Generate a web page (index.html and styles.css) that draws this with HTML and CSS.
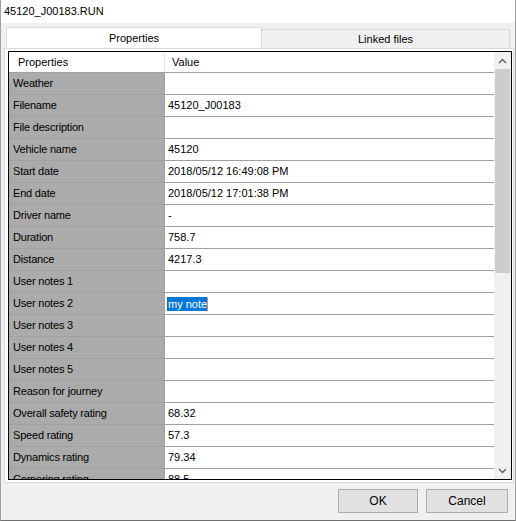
FILE: index.html
```html
<!DOCTYPE html>
<html>
<head>
<meta charset="utf-8">
<link rel="stylesheet" href="styles.css">
</head>
<body>
<div class="window">
  <div class="titlebar">45120_J00183.RUN</div>
  <div class="body">
    <div class="tabs">
      <div class="tab active">Properties</div>
      <div class="tab">Linked files</div>
    </div>
    <div class="panel">
      <div class="grid">
        <div class="grid-main">
          <div class="header">
            <div class="hcell c1">Properties</div>
            <div class="hcell c2">Value</div>
          </div>
          <div class="rows">
            <div class="row"><div class="cell c1">Weather</div><div class="cell c2"></div></div>
            <div class="row"><div class="cell c1">Filename</div><div class="cell c2">45120_J00183</div></div>
            <div class="row"><div class="cell c1">File description</div><div class="cell c2"></div></div>
            <div class="row"><div class="cell c1">Vehicle name</div><div class="cell c2">45120</div></div>
            <div class="row"><div class="cell c1">Start date</div><div class="cell c2">2018/05/12 16:49:08 PM</div></div>
            <div class="row"><div class="cell c1">End date</div><div class="cell c2">2018/05/12 17:01:38 PM</div></div>
            <div class="row"><div class="cell c1">Driver name</div><div class="cell c2">-</div></div>
            <div class="row"><div class="cell c1">Duration</div><div class="cell c2">758.7</div></div>
            <div class="row"><div class="cell c1">Distance</div><div class="cell c2">4217.3</div></div>
            <div class="row"><div class="cell c1">User notes 1</div><div class="cell c2"></div></div>
            <div class="row"><div class="cell c1">User notes 2</div><div class="cell c2 editing"><span class="sel">my note</span><span class="caret"></span></div></div>
            <div class="row"><div class="cell c1">User notes 3</div><div class="cell c2"></div></div>
            <div class="row"><div class="cell c1">User notes 4</div><div class="cell c2"></div></div>
            <div class="row"><div class="cell c1">User notes 5</div><div class="cell c2"></div></div>
            <div class="row"><div class="cell c1">Reason for journey</div><div class="cell c2"></div></div>
            <div class="row"><div class="cell c1">Overall safety rating</div><div class="cell c2">68.32</div></div>
            <div class="row"><div class="cell c1">Speed rating</div><div class="cell c2">57.3</div></div>
            <div class="row"><div class="cell c1">Dynamics rating</div><div class="cell c2">79.34</div></div>
            <div class="row"><div class="cell c1">Cornering rating</div><div class="cell c2">88.5</div></div>
          </div>
        </div>
        <div class="scrollbar">
          <div class="arrow">
            <svg width="9" height="6" viewBox="0 0 9 6"><path d="M1 5 L4.5 1.5 L8 5" fill="none" stroke="#606060" stroke-width="1.4"/></svg>
          </div>
          <div class="track">
            <div class="thumb"></div>
          </div>
          <div class="arrow">
            <svg width="9" height="6" viewBox="0 0 9 6"><path d="M1 1 L4.5 4.5 L8 1" fill="none" stroke="#606060" stroke-width="1.4"/></svg>
          </div>
        </div>
      </div>
    </div>
    <div class="buttons">
      <div class="btn">OK</div>
      <div class="btn">Cancel</div>
    </div>
  </div>
</div>
</body>
</html>
```
FILE: styles.css
```css
* { box-sizing: border-box; }
html, body { margin: 0; padding: 0; }
body {
  width: 516px;
  height: 521px;
  overflow: hidden;
  background: #f0f0f0;
  font-family: "Liberation Sans", Arial, sans-serif;
  font-size: 11px;
  color: #000;
}
.window {
  width: 516px;
  height: 521px;
  border: 1px solid #a0a0a0;
  border-top: none;
  border-bottom-color: #707070;
  display: flex;
  flex-direction: column;
  background: #f0f0f0;
}
.titlebar {
  height: 23px;
  background: #fff;
  font-family: "Liberation Sans", Arial, sans-serif;
  font-size: 11px;
  line-height: 22px;
  padding-left: 3px;
  color: #000;
}
.body {
  flex: 1;
  display: flex;
  flex-direction: column;
  padding: 4px 1px 0 3px;
}
.tabs {
  display: flex;
  height: 21px;
  align-items: flex-end;
  padding-left: 2px;
}
.tab {
  height: 19px;
  width: 249px;
  border: 1px solid #d9d9d9;
  border-bottom: none;
  background: #f0f0f0;
  text-align: center;
  line-height: 19px;
  margin-left: -1px;
}
.tab.active {
  width: 256px;
  height: 21px;
  background: #fff;
  line-height: 20px;
  margin-left: 0;
  position: relative;
  z-index: 1;
}
.panel {
  height: 435px;
  background: #fff;
  border: 1px solid #d9d9d9;
  padding: 2px 1px 3px 3px;
  width: 510px;
}
.grid {
  height: 429px;
  border: 1px solid #000;
  display: flex;
  overflow: hidden;
}
.grid-main {
  flex: 1;
  display: flex;
  flex-direction: column;
  overflow: hidden;
}
.header {
  display: flex;
  height: 21px;
  flex: none;
  border-bottom: 1px solid #a0a0a0;
  background: #fff;
}
.hcell {
  line-height: 20px;
}
.hcell.c1 {
  width: 156px;
  padding-left: 9px;
  border-right: 1px solid #e5e5e5;
}
.hcell.c2 {
  padding-left: 7px;
}
.rows {
  flex: 1;
  overflow: hidden;
}
.row {
  display: flex;
  height: 22px;
  border-bottom: 1px solid #a0a0a0;
}
.cell {
  line-height: 21px;
  white-space: nowrap;
}
.cell.c1 {
  width: 156px;
  background: #ababab;
  padding-left: 4px;
  border-right: 1px solid #a0a0a0;
  letter-spacing: -0.2px;
}
.cell.c2 {
  flex: 1;
  padding-left: 3px;
  background: #fff;
}
.cell.editing {
  display: flex;
  align-items: center;
  padding-left: 2px;
}
.sel {
  background: #0078d7;
  color: #fff;
  line-height: 14px;
  padding: 0 0 0 1px;
}
.caret {
  width: 1px;
  height: 14px;
  background: #ff8728;
}
.scrollbar {
  width: 17px;
  flex: none;
  background: #f0f0f0;
  display: flex;
  flex-direction: column;
}
.arrow {
  height: 17px;
  display: flex;
  align-items: center;
  justify-content: center;
  flex: none;
}
.track {
  flex: 1;
  padding: 0 1px;
}
.thumb {
  height: 204px;
  background: #cdcdcd;
}
.buttons {
  display: flex;
  justify-content: flex-end;
  gap: 8px;
  padding: 6px 6px 0 0;
}
.btn {
  width: 80px;
  height: 24px;
  border: 1px solid #adadad;
  background: #e1e1e1;
  text-align: center;
  line-height: 22px;
  font-size: 12px;
}
.btn:last-child { width: 82px; }
```
